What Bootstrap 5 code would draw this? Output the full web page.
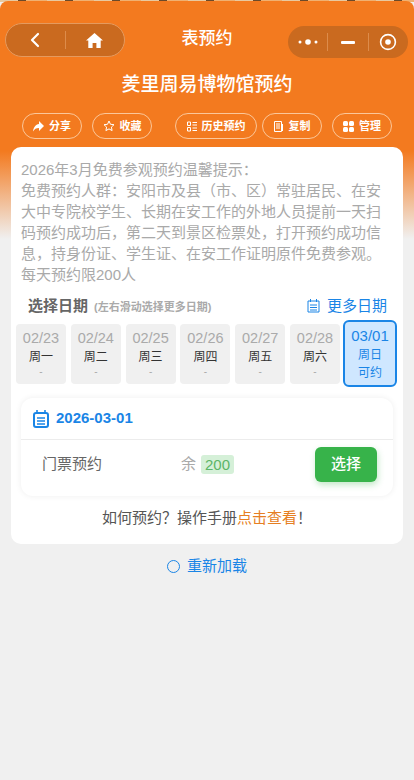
<!DOCTYPE html>
<html lang="zh">
<head>
<meta charset="UTF-8">
<meta name="viewport" content="width=device-width, initial-scale=1.0">
<title>表预约</title>
<link href="https://cdn.jsdelivr.net/npm/bootstrap@5.3.0/dist/css/bootstrap.min.css" rel="stylesheet">
<style>
    html, body { height: 100%; }
    body {
        font-family: "Liberation Sans", "Noto Sans CJK SC", sans-serif;
        background: #f0f0f0;
        color: #555;
        overflow: hidden;
    }
    .shot-strip {
        height: 2px;
        background: repeating-linear-gradient(90deg, #e8c9a0 0, #e8c9a0 18px, #6b4a2a 18px, #6b4a2a 26px, #f0b070 26px, #f0b070 47px);
    }
    .page-wrap {
        min-height: 778px;
        margin-top: -1px;
        background: linear-gradient(180deg, #f37a1f 0, #f37a1f 150px, #f0f0f0 238px);
        border-radius: 8px 8px 0 0;
    }
    .top-bar { height: 57px; padding: 22px 5px 0 5px; }
    .nav-pill {
        width: 120px; height: 34px;
        background: #ca6a1f;
        border: 1px solid #e59a5e;
        border-radius: 17px;
    }
    .nav-pill span { flex: 1; display: flex; justify-content: center; align-items: center; height: 100%; }
    .nav-split { width: 1px; height: 18px; background: #dd8c4b; }
    .top-title { font-size: 17px; color: #fff; font-weight: 500; line-height: 34px; position: absolute; left: 0; right: 0; top: 21px; text-align: center; }
    .mini-pill { width: 120px; height: 32px; margin-top: 3px; margin-left: auto; margin-right: 1px; background: #ca6a1f; border-radius: 16px; }
    .mini-pill span { flex: 1; display: flex; justify-content: center; align-items: center; height: 100%; }
    .page-title { font-size: 19px; font-weight: 500; color: #fff; text-align: center; line-height: 26px; margin-top: 14px; }
    .tool-row { padding: 0 22px; margin-top: 15px; height: 26px; }
    .tool-btn {
        height: 26px; border: 1px solid #fbc79a; border-radius: 13px; color: #fff;
        font-size: 11px; font-weight: 700; background: transparent; padding: 0;
        display: flex; align-items: center; justify-content: center; gap: 5px; width: 60px;
    }
    .tool-btn.wide { width: 82px; }
    .tool-btn.space-m { margin-left: 10px; }
    .tool-btn.space-l { margin-left: 23px; }
    .tool-btn.space-s { margin-left: 5px; }
    .main-panel { margin: 8px 11px 0 11px; background: #fff; border-radius: 10px; padding: 12px 0 16px; }
    .notice-text { font-size: 15px; line-height: 21px; color: #a9a9a9; padding: 0 10px; margin: 0; }
    .date-head { padding: 0 16px 0 17px; margin-top: 8px; height: 26px; }
    .date-head b { font-size: 15px; color: #666; }
    .date-head small { font-size: 11px; font-weight: 700; color: #aaa; margin-left: 6px; }
    .more-link { font-size: 15px; color: #1a85e6; gap: 7px; }
    .date-row { margin: 1px 0 0 5px; gap: 4.8px; align-items: center; }
    .date-box { width: 50px; height: 60px; background: #f0f0f0; border-radius: 4px; text-align: center; color: #333; font-size: 12px; line-height: 20px; padding-top: 5px; }
    .date-box .date-num { font-size: 14.5px; line-height: 18px; color: #aaa; }
    .date-box .date-st { color: #aaa; font-size: 10px; line-height: 10px; }
    .date-box.active { width: 54px; height: 67px; margin-left: -1.800px; background: #cfe7ff; border: 2px solid #1a85e6; color: #1a85e6; border-radius: 6px; }
    .date-box.active .date-num { color: #1a85e6; font-size: 15px; }
    .date-box.active .date-st { color: #1a85e6; font-size: 12px; line-height: 16px; }
    .slot-box { margin: 11px 10px 0 10px; border-radius: 12px; box-shadow: 0 0 6px rgba(0,0,0,.07); }
    .slot-head { height: 42px; padding-left: 12px; gap: 7px; border-bottom: 1px solid #ececec; color: #1a85e6; font-size: 15px; font-weight: 700; }
    .slot-body { height: 56px; padding: 0 16px 8px 21px; font-size: 15px; color: #666; }
    .slot-left { width: 139px; }
    .slot-rest { color: #aaa; gap: 5px; flex: 1; }
    .slot-rest em { font-style: normal; background: #d5f0d8; color: #5cb567; padding: 0 4px; border-radius: 3px; line-height: 19px; }
    .pick-btn { width: 62px; height: 35px; background: #37b34a; border: 0; color: #fff; font-size: 15px; font-weight: 500; border-radius: 6px; box-shadow: 1px 3px 6px rgba(55,179,74,.3); padding: 0; }
    .how-line { font-size: 15px; text-align: center; margin: 12px 0 0; line-height: 20px; color: #555; }
    .how-line a { color: #e67e22; text-decoration: none; }
    .reload-line { margin-top: 11px; color: #1a85e6; font-size: 15px; gap: 7px; }
    .reload-ring { width: 13px; height: 13px; border: 1.5px solid #1a85e6; border-radius: 50%; }
</style>
</head>
<body>
<div class="shot-strip"></div>
<div class="page-wrap position-relative">
    <div class="top-bar d-flex">
        <div class="nav-pill d-flex align-items-center">
            <span><svg width="12" height="16" viewBox="0 0 12 16"><path d="M9 2 3 8l6 6" fill="none" stroke="#fff" stroke-width="2.2" stroke-linecap="round" stroke-linejoin="round"/></svg></span>
            <i class="nav-split"></i>
            <span><svg width="17" height="15" viewBox="0 0 17 15"><path d="M8.500 0 17 7.600h-2.300V15H10.400V10H6.600v5H2.300V7.600H0z" fill="#fff"/></svg></span>
        </div>
        <div class="top-title">表预约</div>
        <div class="mini-pill d-flex align-items-center">
            <span><svg width="20" height="6" viewBox="0 0 20 6"><circle cx="2" cy="3" r="1.500" fill="#fff"/><circle cx="10" cy="3" r="2.800" fill="#fff"/><circle cx="18" cy="3" r="1.500" fill="#fff"/></svg></span>
            <i class="nav-split"></i>
            <span><svg width="14" height="3" viewBox="0 0 14 3"><rect width="14" height="3" rx="1" fill="#fff"/></svg></span>
            <i class="nav-split"></i>
            <span><svg width="18" height="18" viewBox="0 0 18 18"><circle cx="9" cy="9" r="7.400" fill="none" stroke="#fff" stroke-width="1.600"/><circle cx="9" cy="9" r="2.800" fill="#fff"/></svg></span>
        </div>
    </div>
    <div class="page-title">羑里周易博物馆预约</div>
    <div class="tool-row d-flex">
        <button class="tool-btn"><svg width="11" height="11" viewBox="0 0 11 11"><path d="M6 0l5 5-5 5V7C3 7 1.500 8 0 10.500 .5 6.500 2.500 3.500 6 3z" fill="#fff"/></svg>分享</button>
        <button class="tool-btn space-m"><svg width="12" height="12" viewBox="0 0 12 12"><path d="M6 1l1.500 3.300 3.500.4-2.600 2.400.7 3.500L6 8.900 2.900 10.600l.7-3.500L1 4.700l3.500-.4z" fill="none" stroke="#fff"/></svg>收藏</button>
        <button class="tool-btn wide space-l"><svg width="10" height="11" viewBox="0 0 10 11"><path d="M.5 1h3v3.500h-3zM.5 6.500h3V10h-3zM5.500 1.500H10M5.500 4H10M5.500 7H10M5.500 9.500H10" fill="none" stroke="#fff"/></svg>历史预约</button>
        <button class="tool-btn space-s"><svg width="10" height="11" viewBox="0 0 10 11"><path d="M.5.500h7v10h-7zM2 3h4M2 5h4M2 7h4M8.500 3v7" fill="none" stroke="#fff"/></svg>复制</button>
        <button class="tool-btn space-m"><svg width="11" height="11" viewBox="0 0 11 11"><rect width="5" height="5" rx="1.500" fill="#fff"/><rect x="6" width="5" height="5" rx="1.500" fill="#fff"/><rect y="6" width="5" height="5" rx="1.500" fill="#fff"/><rect x="6" y="6" width="5" height="5" rx="1.500" fill="#fff"/></svg>管理</button>
    </div>
    <div class="main-panel">
        <p class="notice-text">2026年3月免费参观预约温馨提示：<br>免费预约人群：安阳市及县（市、区）常驻居民、在安大中专院校学生、长期在安工作的外地人员提前一天扫码预约成功后，第二天到景区检票处，打开预约成功信息，持身份证、学生证、在安工作证明原件免费参观。每天预约限200人</p>
        <div class="date-head d-flex align-items-center justify-content-between">
            <div><b>选择日期</b><small>(左右滑动选择更多日期)</small></div>
            <div class="more-link d-flex align-items-center"><svg width="13" height="14" viewBox="0 0 13 14"><path d="M1 2h11v11H1zM3.500 0v3M9.500 0v3M3 6h7M3 8.500h7M3 11h7" fill="none" stroke="#1a85e6"/></svg>更多日期</div>
        </div>
        <div class="date-row d-flex">
            <div class="date-box"><div class="date-num">02/23</div><div>周一</div><div class="date-st">-</div></div>
            <div class="date-box"><div class="date-num">02/24</div><div>周二</div><div class="date-st">-</div></div>
            <div class="date-box"><div class="date-num">02/25</div><div>周三</div><div class="date-st">-</div></div>
            <div class="date-box"><div class="date-num">02/26</div><div>周四</div><div class="date-st">-</div></div>
            <div class="date-box"><div class="date-num">02/27</div><div>周五</div><div class="date-st">-</div></div>
            <div class="date-box"><div class="date-num">02/28</div><div>周六</div><div class="date-st">-</div></div>
            <div class="date-box active"><div class="date-num">03/01</div><div>周日</div><div class="date-st">可约</div></div>
        </div>
        <div class="slot-box">
            <div class="slot-head d-flex align-items-center"><svg width="16" height="18" viewBox="0 0 16 18"><rect x="1" y="3" width="14" height="14" rx="2" fill="none" stroke="#1a85e6" stroke-width="2"/><path d="M4 0v4M12 0v4M4 8h8M4 11h8M4 14h8" stroke="#1a85e6" stroke-width="1.600"/></svg>2026-03-01</div>
            <div class="slot-body d-flex align-items-center">
                <div class="slot-left">门票预约</div>
                <div class="slot-rest d-flex align-items-center">余<em>200</em></div>
                <button class="pick-btn">选择</button>
            </div>
        </div>
        <p class="how-line">如何预约？操作手册<a href="#">点击查看</a>！</p>
    </div>
    <div class="reload-line d-flex align-items-center justify-content-center"><i class="reload-ring"></i>重新加载</div>
</div>
<script src="https://cdn.jsdelivr.net/npm/bootstrap@5.3.0/dist/js/bootstrap.bundle.min.js"></script>
</body>
</html>
